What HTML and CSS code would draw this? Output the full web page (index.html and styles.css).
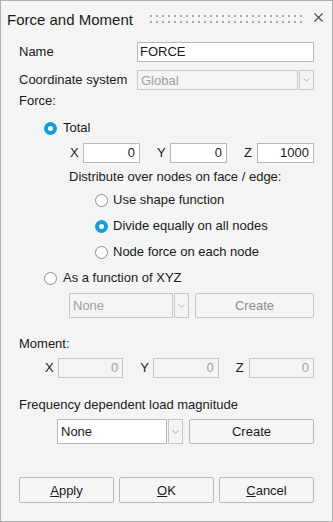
FILE: index.html
```html
<!DOCTYPE html>
<html lang="en">
<head>
    <meta charset="UTF-8">
    <title>Force and Moment</title>
    <link rel="stylesheet" href="styles.css">
</head>
<body>
    <div class="window">
        <div class="title-bar">
            <span class="title">Force and Moment</span>
            <span class="grip"></span>
            <svg class="close" width="9" height="9" viewBox="0 0 9 9">
                <path d="M0.5 0.5 L8.5 8.5 M8.5 0.5 L0.5 8.5" stroke="#505050" stroke-width="1.2" fill="none"/>
            </svg>
        </div>

        <div class="content">
            <div class="row field-row">
                <span class="label-col">Name</span>
                <div class="input grow">FORCE</div>
            </div>

            <div class="row field-row coord-row">
                <span class="label-col">Coordinate system</span>
                <div class="combo grow disabled">
                    <div class="combo-value">Global</div>
                    <div class="combo-btn"><svg width="7" height="4" viewBox="0 0 7 4"><path d="M0.5 0.5 L3.5 3.3 L6.5 0.5" stroke="#b4b4b4" fill="none"/></svg></div>
                </div>
            </div>

            <div class="text-line force-label">Force:</div>

            <div class="row radio-row total-row">
                <span class="radio checked"></span>
                <span>Total</span>
            </div>

            <div class="row xyz force-xyz">
                <span class="axis">X</span><div class="input num">0</div>
                <span class="axis">Y</span><div class="input num">0</div>
                <span class="axis">Z</span><div class="input num">1000</div>
            </div>

            <div class="text-line distribute">Distribute over nodes on face / edge:</div>

            <div class="row radio-row sub-radio first-sub">
                <span class="radio"></span>
                <span>Use shape function</span>
            </div>
            <div class="row radio-row sub-radio">
                <span class="radio checked"></span>
                <span>Divide equally on all nodes</span>
            </div>
            <div class="row radio-row sub-radio">
                <span class="radio"></span>
                <span>Node force on each node</span>
            </div>

            <div class="row radio-row function-row">
                <span class="radio"></span>
                <span>As a function of XYZ</span>
            </div>

            <div class="row combo-row function-combo">
                <div class="combo disabled fn-combo">
                    <div class="combo-value">None</div>
                    <div class="combo-btn"><svg width="7" height="4" viewBox="0 0 7 4"><path d="M0.5 0.5 L3.5 3.3 L6.5 0.5" stroke="#b4b4b4" fill="none"/></svg></div>
                </div>
                <button class="btn disabled grow">Create</button>
            </div>

            <div class="text-line moment-label">Moment:</div>

            <div class="row xyz moment-xyz">
                <span class="axis">X</span><div class="input num disabled">0</div>
                <span class="axis">Y</span><div class="input num disabled">0</div>
                <span class="axis">Z</span><div class="input num disabled">0</div>
            </div>

            <div class="text-line freq-label">Frequency dependent load magnitude</div>

            <div class="row combo-row freq-combo">
                <div class="combo fq-combo">
                    <div class="combo-value">None</div>
                    <div class="combo-btn"><svg width="7" height="4" viewBox="0 0 7 4"><path d="M0.5 0.5 L3.5 3.3 L6.5 0.5" stroke="#a8a8a8" fill="none"/></svg></div>
                </div>
                <button class="btn grow">Create</button>
            </div>

            <div class="row actions">
                <button class="btn action"><u>A</u>pply</button>
                <button class="btn action"><u>O</u>K</button>
                <button class="btn action"><u>C</u>ancel</button>
            </div>
        </div>
    </div>
</body>
</html>
```

FILE: styles.css
```css
* {
    box-sizing: border-box;
}
body {
    margin: 0;
    font-family: "Liberation Sans", Arial, sans-serif;
    font-size: 13px;
    color: #1a1a1a;
}
.window {
    width: 333px;
    height: 522px;
    background-color: #f4f4f4;
    border: 1px solid #b0b0b0;
}
.title-bar {
    height: 33px;
    display: flex;
    align-items: flex-start;
    padding: 10px 9px 0 6px;
}
.title {
    font-size: 15px;
    line-height: 18px;
}
.grip {
    flex: 1;
    height: 10px;
    margin: 3px 8px 0 16px;
    background-image: linear-gradient(to right, #a8a8a8 2px, transparent 2px),
                      linear-gradient(to right, #a8a8a8 2px, transparent 2px);
    background-size: 6px 2px, 6px 2px;
    background-position: 1px 1px, 1px 7px;
    background-repeat: repeat-x;
}
.close {
    margin-top: 2px;
}
.content {
    padding: 8px 18px 0 18px;
}
.row {
    display: flex;
    align-items: center;
}
.grow {
    flex: 1;
}
.field-row {
    height: 20px;
}
.label-col {
    width: 118px;
    line-height: 16px;
}
.coord-row {
    margin-top: 8px;
}
.input {
    height: 20px;
    border: 1px solid #b9b9b9;
    background-color: #fff;
    padding: 0 2px;
    line-height: 18px;
    white-space: nowrap;
}
.input.num {
    flex: 1;
    text-align: right;
    padding-right: 4px;
}
.input.disabled {
    background-color: #f4f4f4;
    border-color: #c6c6c6;
    color: #a0a0a0;
}
.combo {
    display: flex;
    gap: 1px;
    height: 100%;
}
.combo-value {
    flex: 1;
    border: 1px solid #b9b9b9;
    background-color: #fff;
    padding: 0 3px;
    display: flex;
    align-items: center;
}
.combo-btn {
    width: 15px;
    border: 1px solid #c6c6c6;
    display: flex;
    align-items: center;
    justify-content: center;
}
.combo.disabled .combo-value {
    background-color: #f4f4f4;
    border-color: #c6c6c6;
    color: #a0a0a0;
}
.text-line {
    line-height: 16px;
    height: 16px;
}
.force-label {
    margin-top: 3px;
}
.radio-row {
    height: 16px;
    line-height: 16px;
    gap: 6px;
}
.radio {
    width: 13px;
    height: 13px;
    border-radius: 50%;
    border: 1px solid #8c8c8c;
    background-color: #fff;
}
.radio.checked {
    border: 4px solid #139ddc;
    background-color: #fff;
}
.total-row {
    margin-top: 11px;
    padding-left: 25px;
}
.xyz {
    height: 20px;
    gap: 0;
}
.axis {
    width: 13px;
    flex: none;
    line-height: 16px;
}
.xyz .input + .axis {
    margin-left: 17px;
}
.force-xyz {
    margin-top: 7px;
    margin-left: 51px;
}
.distribute {
    margin-top: 6px;
    margin-left: 50px;
}
.sub-radio {
    margin-top: 10px;
    padding-left: 76px;
    gap: 5px;
}
.sub-radio.first-sub {
    margin-top: 7px;
}
.function-row {
    margin-top: 10px;
    padding-left: 25px;
}
.combo-row {
    height: 25px;
    gap: 6px;
}
.function-combo {
    margin-top: 7px;
    margin-left: 50px;
}
.fn-combo {
    width: 120px;
}
.moment-label {
    margin-top: 18px;
}
.moment-xyz {
    margin-top: 6px;
    margin-left: 26px;
}
.freq-label {
    margin-top: 19px;
}
.freq-combo {
    margin-top: 6px;
    margin-left: 38px;
}
.fq-combo {
    width: 126px;
}
.fq-combo .combo-btn {
    border-color: #c6c6c6;
}
.btn {
    height: 100%;
    font-family: inherit;
    font-size: 13px;
    color: #1a1a1a;
    background-color: #f5f5f5;
    border: 1px solid #b9b9b9;
    border-radius: 2px;
    padding: 0;
}
.btn.disabled {
    color: #8c8c8c;
    border-color: #c6c6c6;
}
.actions {
    margin-top: 33px;
    height: 26px;
    gap: 5px;
}
.action {
    flex: 1;
}
```
